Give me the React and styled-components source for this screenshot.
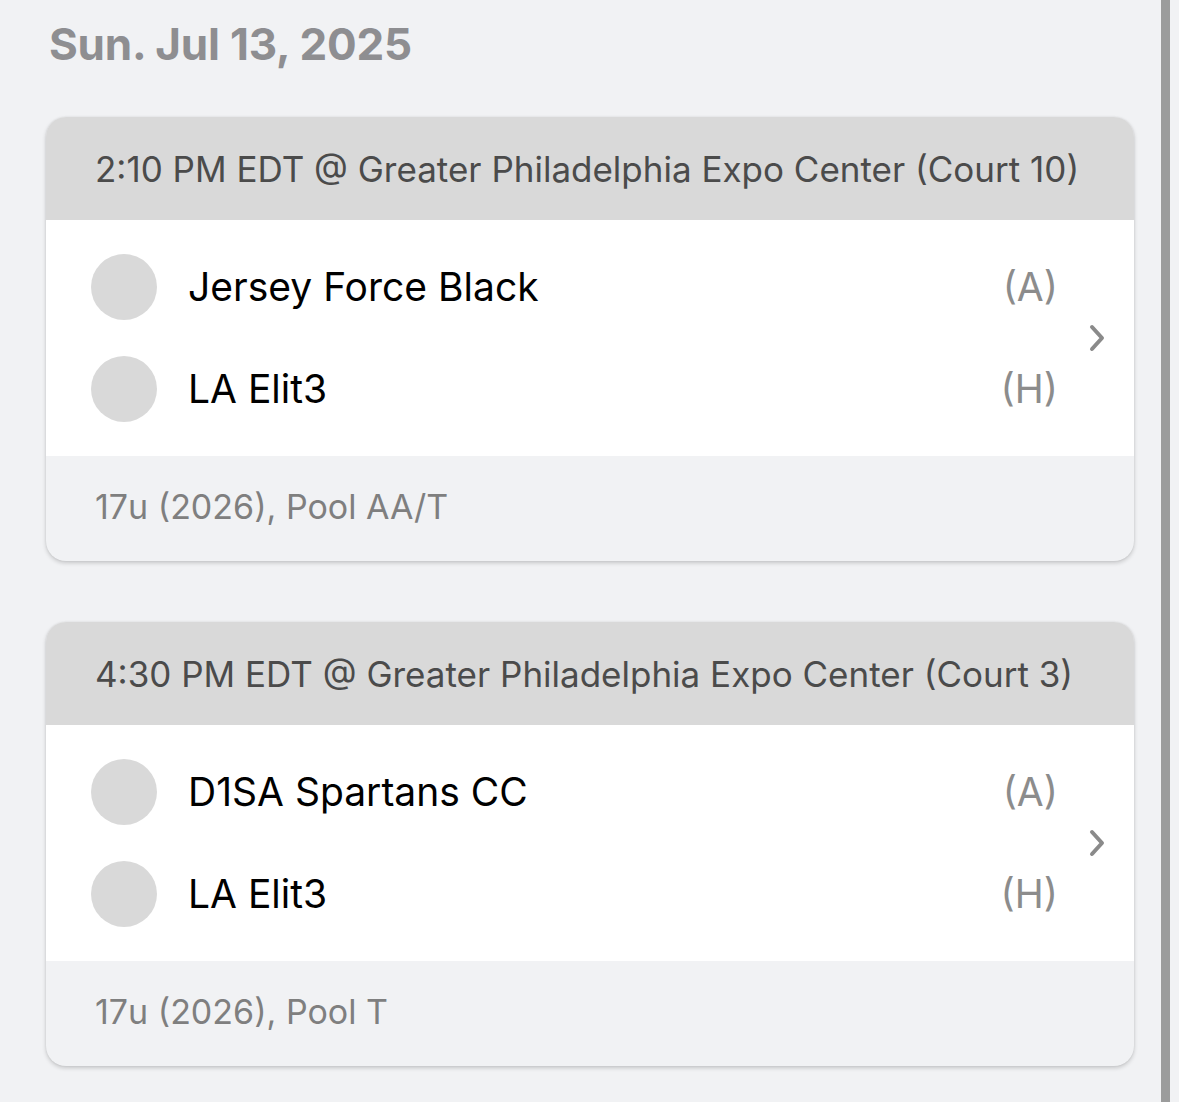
import React from "react";
import styled, { createGlobalStyle } from "styled-components";

const Global = createGlobalStyle`
  html, body { margin: 0; padding: 0; background: #f1f2f4; }
  body { font-family: Inter, "Noto Sans", sans-serif; }
`;

const Page = styled.div`
  display: flex;
  min-height: 1102px;
  background: #f1f2f4;
`;

const Content = styled.main`
  flex: 1;
  padding: 18px 27px 0 46px;
  display: flex;
  flex-direction: column;
`;

const ScrollTrack = styled.div`
  width: 9px;
  margin-right: 9px;
  background: #9b9c9c;
`;

const DateHeading = styled.h2`
  margin: 0 0 47px 3px;
  font-size: 44px;
  line-height: 52px;
  font-weight: 700;
  color: #8e8e91;
  letter-spacing: -0.2px;
`;

const CardList = styled.div`
  display: flex;
  flex-direction: column;
  gap: 61px;
`;

const Card = styled.section`
  border-radius: 20px;
  overflow: hidden;
  background: #f1f2f4;
  box-shadow: 0 2px 4px rgba(0, 0, 0, 0.18), 0 0 2px rgba(0, 0, 0, 0.08);
`;

const CardHeader = styled.header`
  height: 103px;
  display: flex;
  align-items: center;
  padding-left: 49px;
  background: #d9d9d9;
  color: #4b4b4b;
  font-size: 35px;
  white-space: nowrap;
`;

const CardBody = styled.div`
  display: flex;
  align-items: center;
  background: #fff;
  padding: 34px 29px 34px 45px;
`;

const Teams = styled.div`
  flex: 1;
  display: flex;
  flex-direction: column;
  gap: 36px;
  padding-right: 31px;
`;

const TeamRow = styled.div`
  display: flex;
  align-items: center;
  height: 66px;
`;

const Avatar = styled.div`
  width: 66px;
  height: 66px;
  border-radius: 50%;
  background: #d9d9d9;
  flex: none;
`;

const TeamName = styled.span`
  flex: 1;
  margin-left: 31px;
  font-size: 39px;
  line-height: 46px;
  color: #000;
`;

const Side = styled.span`
  font-size: 39px;
  line-height: 46px;
  color: #8c8c8c;
`;

const Chevron = styled.svg`
  width: 16px;
  height: 28px;
  flex: none;
`;

const CardFooter = styled.footer`
  height: 105px;
  display: flex;
  align-items: center;
  padding-left: 49px;
  padding-bottom: 5px;
  box-sizing: border-box;
  color: #7f7f7f;
  font-size: 34px;
`;

const games = [
  {
    header: "2:10 PM EDT @ Greater Philadelphia Expo Center (Court 10)",
    teams: [
      { name: "Jersey Force Black", side: "(A)" },
      { name: "LA Elit3", side: "(H)" },
    ],
    footer: "17u (2026), Pool AA/T",
  },
  {
    header: "4:30 PM EDT @ Greater Philadelphia Expo Center (Court 3)",
    teams: [
      { name: "D1SA Spartans CC", side: "(A)" },
      { name: "LA Elit3", side: "(H)" },
    ],
    footer: "17u (2026), Pool T",
  },
];

export default function App() {
  return (
    <>
      <Global />
      <Page>
        <Content>
          <DateHeading>Sun. Jul 13, 2025</DateHeading>
          <CardList>
            {games.map((g) => (
              <Card key={g.header}>
                <CardHeader>{g.header}</CardHeader>
                <CardBody>
                  <Teams>
                    {g.teams.map((t) => (
                      <TeamRow key={t.side}>
                        <Avatar />
                        <TeamName>{t.name}</TeamName>
                        <Side>{t.side}</Side>
                      </TeamRow>
                    ))}
                  </Teams>
                  <Chevron viewBox="0 0 16 28">
                    <path d="M3 3 L13 14 L3 25" fill="none" stroke="#8a8a8a" strokeWidth="4" strokeLinecap="round" strokeLinejoin="round" />
                  </Chevron>
                </CardBody>
                <CardFooter>{g.footer}</CardFooter>
              </Card>
            ))}
          </CardList>
        </Content>
        <ScrollTrack />
      </Page>
    </>
  );
}
